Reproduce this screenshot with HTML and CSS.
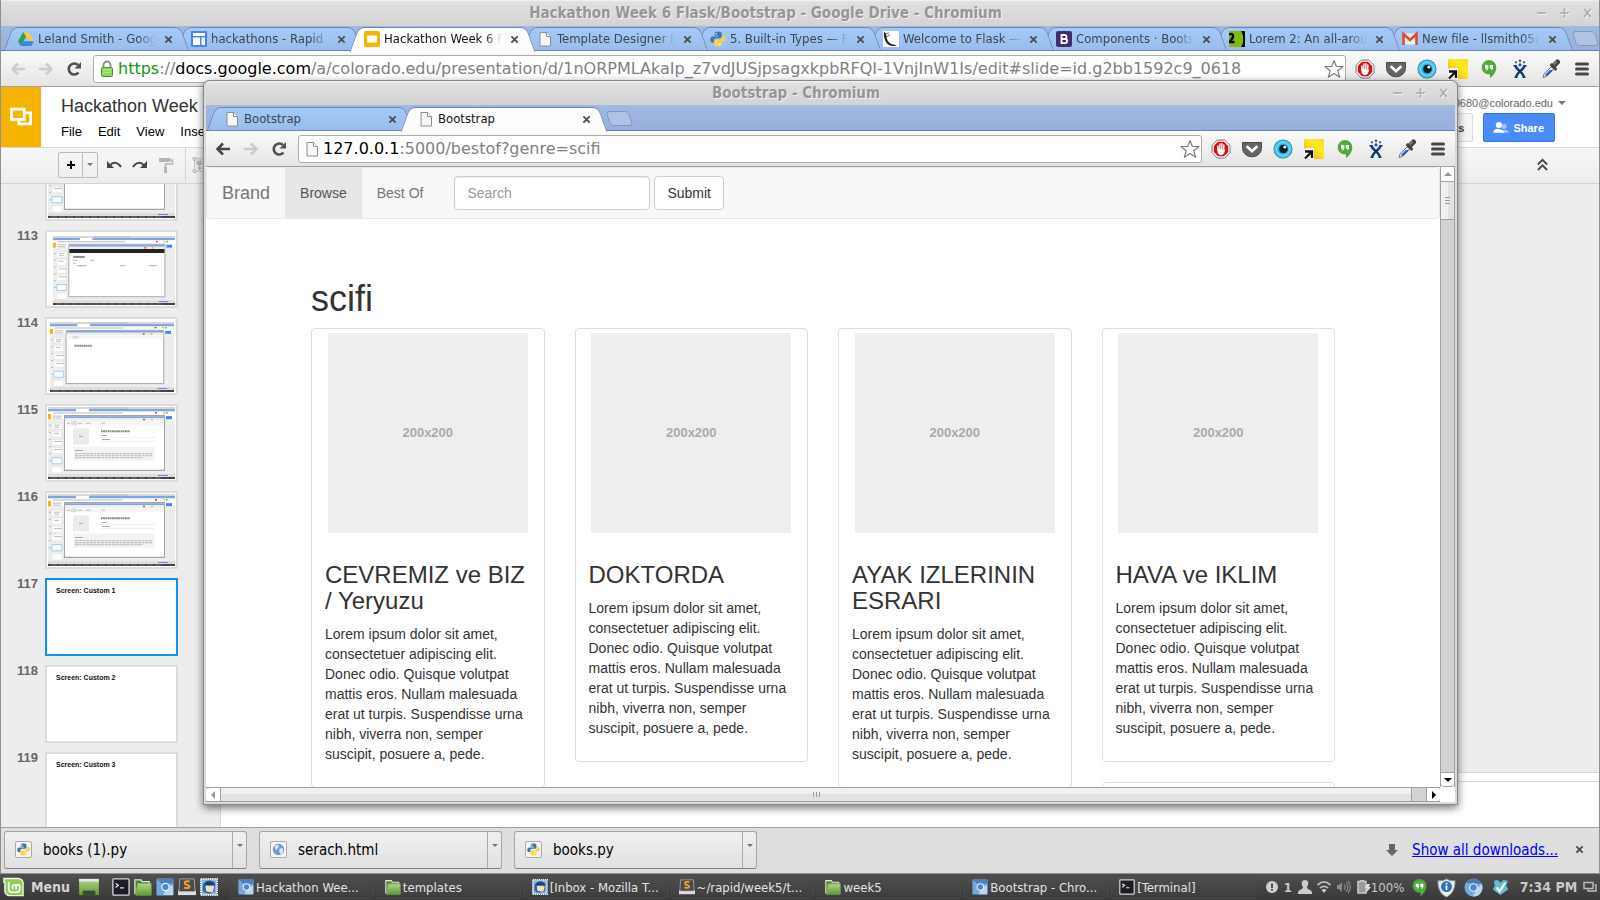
FILE: index.html
```html
<!DOCTYPE html>
<html lang="en">
<head>
<meta charset="utf-8">
<title>Hackathon Week 6 Flask/Bootstrap</title>
<link rel="stylesheet" href="styles.css">
</head>
<body>
<svg class="defs" aria-hidden="true">
  <linearGradient id="gy" x1="0" y1="1" x2="1" y2="0"><stop offset="0" stop-color="#f6941e"/><stop offset=".6" stop-color="#f8ec22"/><stop offset="1" stop-color="#fbe122"/></linearGradient>
  <radialGradient id="gb"><stop offset="0" stop-color="#0d3f5c"/><stop offset=".5" stop-color="#35b3da"/><stop offset=".8" stop-color="#58cdee"/><stop offset="1" stop-color="#1a7fa8"/></radialGradient>
  <linearGradient id="gg" x1="0" y1="0" x2="0" y2="1"><stop offset="0" stop-color="#b3d68a"/><stop offset="1" stop-color="#5f9a35"/></linearGradient>
  <symbol id="i-back" viewBox="0 0 16 16"><path d="M8 2.5 2.500 8 8 13.500M3 8h12" fill="none" stroke="currentColor" stroke-width="2.600"/></symbol>
  <symbol id="i-fwd" viewBox="0 0 16 16"><path d="M8 2.500 13.500 8 8 13.500M1 8h12" fill="none" stroke="currentColor" stroke-width="2.600"/></symbol>
  <symbol id="i-reload" viewBox="0 0 16 16"><path d="M12.500 11.500A5.500 5.500 0 1 1 12 4" fill="none" stroke="#505050" stroke-width="2.600"/><path d="M15 1v6.500H8.500z" fill="#505050"/></symbol>
  <symbol id="i-x" viewBox="0 0 10 10"><path d="m1.500 1.500 7 7m0-7-7 7" fill="none" stroke="currentColor" stroke-width="2"/></symbol>
  <symbol id="i-page" viewBox="0 0 16 16"><path d="M3 1.500h6.500l4 4v9.500H3z" fill="#f7f7f7" stroke="#8e8e8e"/><path d="M9.500 1.500v4h4" fill="#fff" stroke="#8e8e8e"/></symbol>
  <symbol id="i-star" viewBox="0 0 20 20"><path d="m10 1.500 2.300 6H19l-5.200 4.200 1.900 6.500L10 14.400l-5.700 3.800 1.900-6.500L1 7.500h6.700z" fill="#fff" stroke="#7d7d7d" stroke-width="1.200" stroke-linejoin="round"/></symbol>
  <symbol id="i-menu" viewBox="0 0 20 20"><path d="M4.500 5h11M4.500 10h11M4.500 15h11" stroke="#484848" stroke-width="3" stroke-linecap="round"/></symbol>
  <symbol id="i-stop" viewBox="0 0 20 20"><path d="M6.300 1h7.400L19 6.300v7.400L13.700 19H6.300L1 13.700V6.300z" fill="#fff" stroke="#777"/><path d="M7 2.800h6L17.200 7v6L13 17.200H7L2.800 13V7z" fill="#d90d12"/><path d="M6.500 9v3.500c0 2 1.300 3.500 3.500 3.500 2.500 0 3.500-2 4.200-5.500l-1.600.9z" fill="#fff"/><path d="M6.900 11V7M8.900 11V5M10.900 11V4.700M12.800 12V6" stroke="#fff" stroke-width="1.400" stroke-linecap="round"/></symbol>
  <symbol id="i-pocket" viewBox="0 0 20 20"><path d="M.5 3.500h19V9A9.500 8.500 0 0 1 10 17.800 9.500 8.500 0 0 1 .5 9z" fill="#636467" stroke="#4b4b4b"/><path d="m5.500 8 4.500 4.300L14.500 8" fill="none" stroke="#fff" stroke-width="2.600" stroke-linecap="round"/></symbol>
  <symbol id="i-eye" viewBox="0 0 20 20"><circle cx="10" cy="10" r="9.500" fill="url(#gb)"/><circle cx="10" cy="10" r="6.500" fill="none" stroke="#7fdcf3" stroke-width="1"/><circle cx="10.500" cy="10" r="4.300" fill="#081b29"/><circle cx="11.800" cy="8" r="1.600" fill="#e8fbff"/></symbol>
  <symbol id="i-yellow" viewBox="0 0 20 20"><path d="M0 0h20v20H10V9H0z" fill="url(#gy)"/><path d="M0 10h10v10H0z" fill="#fff"/><path d="M1 12.500h7V19M8 12.500 1 19.500" fill="none" stroke="#111" stroke-width="2.300"/></symbol>
  <symbol id="i-hang" viewBox="0 0 20 20"><path d="M10 1a7.300 7.300 0 0 1 7.300 7.500c0 4.500-3.300 8.500-6.300 10.700v-3.700C6.500 15.800 2.700 12.500 2.700 8.500A7.300 7.300 0 0 1 10 1z" fill="#53a93f"/><path d="M6 6h3.300v3.500L7.500 12v-2.600H6zM10.800 6h3.300v3.500L12.300 12v-2.600h-1.500z" fill="#fff"/></symbol>
  <symbol id="i-jira" viewBox="0 0 20 20"><path d="M5.500 6.500c.5 4.500 7.500 6 8.500 12M14.500 6.500c-.5 4.500-7.500 6-8.500 12" fill="none" stroke="#103d70" stroke-width="2.400"/><path d="M3.500 6.800h3M13.500 6.800h3M4.500 18.300h3M12.500 18.300h3" stroke="#103d70" stroke-width="1.500"/><g fill="#2a5d91"><circle cx="6" cy="3.300" r="1.100"/><circle cx="10" cy="1.800" r="1.200"/><circle cx="14" cy="3.300" r="1.100"/><circle cx="10" cy="5.800" r="1.600"/></g></symbol>
  <symbol id="i-drop" viewBox="0 0 20 20"><path d="m2 18.500 1-3.500 8.500-8.500 2.500 2.500L5.500 17.500z" fill="#dce5f8" stroke="#777"/><path d="m4 16 5-5h3.200l-6 6z" fill="#3157c8"/><path d="m9.500 5 6 6" stroke="#444" stroke-width="2.600"/><path d="m12.500 7 4-4" stroke="#444" stroke-width="5" stroke-linecap="round"/><path d="m13 5.500 2.500-3" stroke="#999" stroke-width="1.200"/></symbol>
  <symbol id="i-drive" viewBox="0 0 16 16"><path d="M5.300 1h5.200L16 10.300h-5.300z" fill="#fbc740"/><path d="M5.300 1 8 5.700 2.700 15 0 10.300z" fill="#2ba24c"/><path d="M5.400 10.300H16L13.300 15H2.700z" fill="#3e82f1"/></symbol>
  <symbol id="i-sites" viewBox="0 0 16 16"><rect width="16" height="16" rx="1" fill="#4285f4"/><path d="M2 2h12v3H2zM2 6.500h7V14H2zM10.500 6.500H14V14h-3.500z" fill="#fff"/></symbol>
  <symbol id="i-slides" viewBox="0 0 16 16"><rect width="16" height="16" rx="2" fill="#f4b400"/><rect x="3" y="4.500" width="10" height="7" fill="#fff"/></symbol>
  <symbol id="i-py" viewBox="0 0 16 16"><path d="M8 .5C5.500.500 4.500 1.300 4.500 3v1.700h4v.7H2.800C1 5.400.3 6.800.3 8.400c0 1.700.7 3.100 2.300 3.100H4V9.500c0-1.300 1-2.300 2.300-2.300h3.500c1.200 0 1.900-.8 1.900-1.900V3C11.700 1.200 10.300.5 8 .5z" fill="#3b77a8"/><path d="M8 15.500c2.500 0 3.500-.8 3.500-2.500v-1.700h-4v-.7h5.700c1.800 0 2.500-1.400 2.500-3s-.7-3.100-2.300-3.100H12v2c0 1.300-1 2.300-2.300 2.300H6.200c-1.200 0-1.900.8-1.900 1.900V13c0 1.800 1.400 2.500 3.700 2.500z" fill="#ffd13f"/><circle cx="6.200" cy="2.700" r=".8" fill="#fff"/><circle cx="9.800" cy="13.300" r=".8" fill="#fff"/></symbol>
  <symbol id="i-flask" viewBox="0 0 16 16"><path d="M0 0h16v16H0z" fill="#fff"/><path d="M1 1c3 1 2 4 3 7 1 3.500 4 5.500 10 6.500-5 1.500-9 0-11-3.500S.5 4 1 1z" fill="#222"/><path d="m2 3 4-1M3 6l4-2" stroke="#666"/></symbol>
  <symbol id="i-boot" viewBox="0 0 16 16"><rect width="16" height="16" rx="2" fill="#452b6b"/><path d="M5.500 4h3a2 2 0 0 1 0 4h-3zm0 4h3.500a2.100 2.100 0 0 1 0 4.200H5.500z" fill="none" stroke="#fff" stroke-width="1.800"/></symbol>
  <symbol id="i-lorem" viewBox="0 0 16 16"><path d="M0 0h16v16H0z" fill="#83b80c"/><path d="M0 3.500c3.500-1.500 5 1 3.500 3.500L.5 11h5" fill="none" stroke="#000" stroke-width="2.400"/><path d="M12 0c3 4 3 12 0 16h4V0z" fill="#000"/></symbol>
  <symbol id="i-gmail" viewBox="0 0 16 16"><path d="M1 2.500h14v11H1z" fill="#f3eee2"/><path d="M1.500 14V3L8 9l6.500-6v11" fill="none" stroke="#dd4b3e" stroke-width="2.600"/></symbol>
  <symbol id="i-chromium" viewBox="0 0 20 20"><rect x=".5" y=".5" width="19" height="19" rx="1.500" fill="#76a7dc"/><path d="M1 1h18v5H6z" fill="#4d80bd"/><path d="M8 19h11V8l-6 1z" fill="#b9d5f2"/><circle cx="10.500" cy="10" r="4.700" fill="#e8f2fc"/><circle cx="10.500" cy="10" r="3.400" fill="#4b86cb"/></symbol>
  <symbol id="i-cround" viewBox="0 0 20 20"><circle cx="10" cy="10" r="9.500" fill="#76a7dc"/><path d="M2 5a9.500 9.500 0 0 1 16.500 1H10z" fill="#4979b3"/><path d="M18.500 6A9.500 9.500 0 0 1 9 19.500l5-9z" fill="#bcd6f1"/><circle cx="10" cy="10" r="4.600" fill="#e8f2fc"/><circle cx="10" cy="10" r="3.400" fill="#4b86cb"/></symbol>
  <symbol id="i-folder" viewBox="0 0 20 20"><path d="M1 18V2h7l1 2h8v3" fill="#4f802c" stroke="#dfe8d4" stroke-width="1.400"/><path d="M4 6h15v13H2z" fill="url(#gg)" stroke="#7fae55"/></symbol>
  <symbol id="i-term" viewBox="0 0 20 20"><rect x="1" y="1" width="18" height="18" rx="1" fill="#1d1b26" stroke="#d5d5d5" stroke-width="1.500"/><path d="m4 6 3 2-3 2.500M9 11h4" fill="none" stroke="#eee" stroke-width="1.300"/></symbol>
  <symbol id="i-subl" viewBox="0 0 20 20"><path d="M0 14h20v5H0z" fill="#ddd"/><path d="M2 1h16l1 14H1z" fill="#4a4a4a" stroke="#aaa"/><path d="M13 4C9 3 7 4 7.500 6S13 7.500 12.800 9.500s-3.300 2-6 1" fill="none" stroke="#f49b34" stroke-width="2.300"/></symbol>
  <symbol id="i-mail" viewBox="0 0 20 20"><rect x="1" y="1" width="18" height="18" fill="#8fb4dc" stroke="#f4f4f4" stroke-width="2" stroke-dasharray="1.500 1"/><path d="M3 9c1-7 11-8 14-3l-1 9c-3 3-11 3-13-1z" fill="#2767b0"/><path d="m6 9 5-1.500 5 2-2 6.500-7-1z" fill="#f1dfb6"/><path d="M4 7c3-4 9-4 12 0l-5 1.500z" fill="#183e74"/></symbol>
  <symbol id="shot" viewBox="0 0 127 71" preserveAspectRatio="none">
    <path fill="#ededed" d="M0 0h127v71H0z"/><path fill="#d7d7d7" d="M0 0h127v2H0z"/><path fill="#7fa8dd" d="M0 2h127v2.500H0z"/><path fill="#fff" d="M28 2h13v3H28zM0 4.500h127v7H0z"/><path fill="#bbb" d="M5 5.500h70v1H5zM42 .5h38v1H42z"/>
    <path fill="#f4b400" d="M0 7h3v5H0z"/><path fill="#4285f4" d="M118 9h6v3h-6z"/><path fill="#e33" d="M107 5h2v1.500h-2z"/><path fill="#e8c11c" d="M115 5h2v1.500h-2z"/><path fill="#4a4" d="M118 5h1.500v1.500H118z"/>
    <path fill="#fff" stroke="#ddd" stroke-width=".5" d="M4 16h10v6H4zM4 24h10v6H4zM4 32h10v6H4zM4 40h10v6H4zM4 59h10v6H4z"/><path fill="#fff" stroke="#74bdf1" stroke-width=".7" d="M4 50h10v6H4z"/>
    <path d="M5 9h9M5 11h8M6 18h6M6 20h5M6 26h5M6 34h8M6 42h8M1 18h2M1 25h2M1 32h2M1 39h2M1 46h2M1 53h2" stroke="#aaa" stroke-width=".8"/>
    <path fill="#fff" stroke="#a5a5a5" d="M16.500 8.500h100v54h-100z"/><path fill="#82a5d9" d="M17 9h99v2H17z"/><path fill="#eee" d="M17 11h99v2.500H17z"/><path fill="#d44" d="M95 11.500h2v1.500h-2z"/><path fill="#ecc51d" d="M103 11.500h2v1.500h-2z"/><path fill="#ddd" d="M0 66h127v3H0z"/><path fill="#77f" d="M110 67h10v1h-10z"/><path fill="#444" d="M0 69h127v2H0z"/><path d="M3 70h110" stroke="#999" stroke-width=".6" stroke-dasharray="6 2"/>
  </symbol>
  <symbol id="detail" viewBox="0 0 127 71" preserveAspectRatio="none"><path fill="#f5f5f5" d="M17 14h99v4H17z"/><path fill="#ddd" d="M23 14h6v4h-6z"/><path d="M19 16h3M30 16h4M38 16h4M54 16h3" stroke="#bbb"/><path fill="#ebebeb" d="M25 21h16v16H25z"/><path d="M31 29h4" stroke="#aaa"/><path fill="#f3f3f3" d="M25 39h82v14H25z"/><path d="M53 24h29" stroke="#888" stroke-width="2" stroke-dasharray="1.500 .5 2 .4"/><path d="M54 28h5M54 32h8M27 43h8" stroke="#aaa"/><path d="M53 30h54M53 34h54" stroke="#e5e5e5" stroke-width=".6"/><path d="M27 46h78M27 48h77M27 50h68" stroke="#b5b5b5" stroke-dasharray="3 .7"/></symbol>
</svg>

<main class="browser">
  <header class="titlebar"><h1 class="wintitle">Hackathon Week 6 Flask/Bootstrap - Google Drive - Chromium</h1>
    <div class="winbtns"><button aria-label="Minimise">−</button><button aria-label="Maximise">+</button><button aria-label="Close">×</button></div></header>
  <nav class="tabs">
    <div class="tab z9"><svg class="fav"><use href="#i-drive"/></svg><span class="tabtext">Leland Smith - Google</span><button class="tabx" aria-label="Close tab"><svg><use href="#i-x"/></svg></button></div>
    <div class="tab z8"><svg class="fav"><use href="#i-sites"/></svg><span class="tabtext">hackathons - Rapid</span><button class="tabx" aria-label="Close tab"><svg><use href="#i-x"/></svg></button></div>
    <div class="tab active"><svg class="fav"><use href="#i-slides"/></svg><span class="tabtext">Hackathon Week 6 F</span><button class="tabx" aria-label="Close tab"><svg><use href="#i-x"/></svg></button></div>
    <div class="tab z7"><svg class="fav"><use href="#i-page"/></svg><span class="tabtext">Template Designer D</span><button class="tabx" aria-label="Close tab"><svg><use href="#i-x"/></svg></button></div>
    <div class="tab z6"><svg class="fav"><use href="#i-py"/></svg><span class="tabtext">5. Built-in Types — P</span><button class="tabx" aria-label="Close tab"><svg><use href="#i-x"/></svg></button></div>
    <div class="tab z5"><svg class="fav"><use href="#i-flask"/></svg><span class="tabtext">Welcome to Flask —</span><button class="tabx" aria-label="Close tab"><svg><use href="#i-x"/></svg></button></div>
    <div class="tab z4"><svg class="fav"><use href="#i-boot"/></svg><span class="tabtext">Components · Bootst</span><button class="tabx" aria-label="Close tab"><svg><use href="#i-x"/></svg></button></div>
    <div class="tab z3"><svg class="fav"><use href="#i-lorem"/></svg><span class="tabtext">Lorem 2: An all-aroun</span><button class="tabx" aria-label="Close tab"><svg><use href="#i-x"/></svg></button></div>
    <div class="tab z2"><svg class="fav"><use href="#i-gmail"/></svg><span class="tabtext">New file - llsmith05@</span><button class="tabx" aria-label="Close tab"><svg><use href="#i-x"/></svg></button></div>
    <button class="newtab" aria-label="New tab"></button>
  </nav>
  <div class="toolbar">
    <button class="nav off" aria-label="Back"><svg><use href="#i-back"/></svg></button><button class="nav off" aria-label="Forward"><svg><use href="#i-fwd"/></svg></button><button class="nav" aria-label="Reload"><svg><use href="#i-reload"/></svg></button>
    <div class="omnibox"><svg class="lock" viewBox="0 0 14 18"><path d="M3.500 9V5a3.500 3.500 0 0 1 7 0v4" fill="none" stroke="#888" stroke-width="1.800"/><rect x="1.500" y="7.500" width="11" height="9" rx="1" fill="#8fd45c" stroke="#4d8e2d"/><path d="M3 10h8M3 12.500h8" stroke="#b6e88f"/></svg>
      <span class="url"><span class="secure">https</span>://<b>docs.google.com</b>/a/colorado.edu/presentation/d/1nORPMLAkaIp_z7vdJUSjpsagxkpbRFQI-1VnjInW1Is/edit#slide=id.g2bb1592c9_0618</span><svg class="star"><use href="#i-star"/></svg></div>
    <div class="exts"><button aria-label="AdBlock"><svg><use href="#i-stop"/></svg></button><button aria-label="Pocket"><svg><use href="#i-pocket"/></svg></button><button aria-label="Eye"><svg><use href="#i-eye"/></svg></button><button aria-label="Resizer"><svg><use href="#i-yellow"/></svg></button><button aria-label="Hangouts"><svg><use href="#i-hang"/></svg></button><button aria-label="Tracker"><svg><use href="#i-jira"/></svg></button><button aria-label="Colour picker"><svg><use href="#i-drop"/></svg></button><button aria-label="Menu"><svg><use href="#i-menu"/></svg></button></div>
  </div>

  <section class="docs">
    <header class="dochead">
      <div class="logo"><svg viewBox="0 0 24 24"><path d="M1.500 3.500h14v11h-14z" fill="none" stroke="#fff" stroke-width="3"/><path d="M17 7.500h5.500v12h-13V16" fill="none" stroke="#fff" stroke-width="3"/></svg></div>
      <div class="docname"><h2>Hackathon Week</h2><div class="menus"><button>File</button><button>Edit</button><button>View</button><button>Insert</button></div></div>
      <div class="account"><button class="email">0680@colorado.edu <i class="caret"></i></button><div class="acts"><button class="comments">Comments</button><button class="share"><svg viewBox="0 0 18 16"><circle cx="12.500" cy="6" r="3" fill="#a5c5fa"/><path d="M10 13.500V11c3-2 7-1 8 2.500z" fill="#a5c5fa"/><circle cx="6.500" cy="4.500" r="3.500" fill="#fff"/><path d="M0 13.500C1 9 4 8.500 6.500 9s5.500 1 6 4.500z" fill="#fff"/></svg>Share</button></div></div>
    </header>
    <div class="doctools">
      <div class="addgroup"><button aria-label="New slide"><svg viewBox="0 0 10 10"><path d="M5 1v8M1 5h8" stroke="#000" stroke-width="2"/></svg></button><button aria-label="Layouts"><i class="caret"></i></button></div>
      <button class="tool" aria-label="Undo"><svg viewBox="0 0 16 16"><path d="M1 4v7h7z" fill="#444"/><path d="M4 8.500c3-4 8-3.500 11 1.500" fill="none" stroke="#444" stroke-width="2"/></svg></button>
      <button class="tool" aria-label="Redo"><svg viewBox="0 0 16 16"><path d="M15 4v7H8z" fill="#444"/><path d="M12 8.500C9 4.500 4 5 1 10" fill="none" stroke="#444" stroke-width="2"/></svg></button>
      <button class="tool" aria-label="Paint format"><svg viewBox="0 0 16 16"><path d="M1 1h11v4H1zM6 10h3v6H6z" fill="#b5b5b5"/><path d="M12 3h2.500v4H7.500v3" fill="none" stroke="#b5b5b5" stroke-width="1.500"/></svg></button>
      <span class="sep"></span>
      <button class="tool" aria-label="Fit"><svg viewBox="0 0 16 18"><path d="M3 2h12M3 16h12M3 2v14" stroke="#bbb"/><path d="M5 4h6v5H5zM7.500 9h2v3h2L8.500 15l-3-3h2z" fill="#bbb"/><path d="M1.500.5h3v3h-3zM1.500 14.500h3v3h-3z" fill="#f3f3f3" stroke="#aaa"/></svg></button>
      <button class="collapse" aria-label="Hide menus"><svg viewBox="0 0 12 14"><path d="m1 7 5-5 5 5M1 13l5-5 5 5" fill="none" stroke="#444" stroke-width="2"/></svg></button>
    </div>
    <div class="docbody">
      <ol class="film">
        <li><b></b><div class="thumb"><svg><use href="#shot"/></svg></div></li>
        <li><b>113</b><div class="thumb t113"><svg viewBox="0 0 127 71" preserveAspectRatio="none"><use href="#shot" width="127" height="71"/><path fill="#222" d="M17 13.500h99v4H17z"/><path d="M21 21.500h12" stroke="#888" stroke-width="2"/><path d="M21 25h4M39 25h4M21 28h3M25 30.500h10M70 30.500h5M100 30.500h8" stroke="#aaa"/></svg></div></li>
        <li><b>114</b><div class="thumb t114"><svg viewBox="0 0 127 71" preserveAspectRatio="none"><use href="#shot" width="127" height="71"/><path fill="#f5f5f5" d="M17 14h99v3H17z"/><path fill="#ddd" d="M23 14h6v3h-6z"/><path d="M25 24h18" stroke="#888" stroke-width="2" stroke-dasharray="1.500 .4"/></svg></div></li>
        <li><b>115</b><div class="thumb"><svg viewBox="0 0 127 71" preserveAspectRatio="none"><use href="#shot" width="127" height="71"/><use href="#detail" width="127" height="71"/></svg></div></li>
        <li><b>116</b><div class="thumb"><svg viewBox="0 0 127 71" preserveAspectRatio="none"><use href="#shot" width="127" height="71"/><use href="#detail" width="127" height="71"/></svg></div></li>
        <li><b>117</b><div class="thumb current">Screen: Custom 1</div></li>
        <li><b>118</b><div class="thumb">Screen: Custom 2</div></li>
        <li><b>119</b><div class="thumb">Screen: Custom 3</div></li>
      </ol>
      <div class="stage"><div class="canvas"></div><div class="notes"></div></div>
    </div>
  </section>

  <footer class="shelf">
    <div class="dl"><button class="dlfile"><span class="dlicon"><svg><use href="#i-py"/></svg></span>books (1).py</button><button class="dlmore" aria-label="Options"><i class="caret"></i></button></div>
    <div class="dl"><button class="dlfile"><span class="dlicon"><svg viewBox="0 0 16 16"><circle cx="8" cy="8" r="7" fill="#6f9ccb"/><path d="M3 4l4-2 2 2-2 2-1 3-2-2zM9 7l4-1 1 4-3 4-2-3z" fill="#dce8f4"/></svg></span>serach.html</button><button class="dlmore" aria-label="Options"><i class="caret"></i></button></div>
    <div class="dl"><button class="dlfile"><span class="dlicon"><svg><use href="#i-py"/></svg></span>books.py</button><button class="dlmore" aria-label="Options"><i class="caret"></i></button></div>
    <div class="showall"><svg viewBox="0 0 12 14"><path d="M3 1h6v6h3l-6 6-6-6h3z" fill="#666"/></svg><a href="#downloads">Show all downloads...</a><button class="tabx" aria-label="Close shelf"><svg><use href="#i-x"/></svg></button></div>
  </footer>
</main>

<section class="popup">
  <header class="titlebar"><h1 class="wintitle">Bootstrap - Chromium</h1>
    <div class="winbtns"><button aria-label="Minimise">−</button><button aria-label="Maximise">+</button><button aria-label="Close">×</button></div></header>
  <nav class="tabs">
    <div class="tab z9"><svg class="fav"><use href="#i-page"/></svg><span class="tabtext">Bootstrap</span><button class="tabx" aria-label="Close tab"><svg><use href="#i-x"/></svg></button></div>
    <div class="tab active"><svg class="fav"><use href="#i-page"/></svg><span class="tabtext">Bootstrap</span><button class="tabx" aria-label="Close tab"><svg><use href="#i-x"/></svg></button></div>
    <button class="newtab" aria-label="New tab"></button>
  </nav>
  <div class="toolbar">
    <button class="nav" aria-label="Back"><svg><use href="#i-back"/></svg></button><button class="nav off" aria-label="Forward"><svg><use href="#i-fwd"/></svg></button><button class="nav" aria-label="Reload"><svg><use href="#i-reload"/></svg></button>
    <div class="omnibox"><svg class="lock"><use href="#i-page"/></svg><span class="url"><b>127.0.0.1</b>:5000/bestof?genre=scifi</span><svg class="star"><use href="#i-star"/></svg></div>
    <div class="exts"><button aria-label="AdBlock"><svg><use href="#i-stop"/></svg></button><button aria-label="Pocket"><svg><use href="#i-pocket"/></svg></button><button aria-label="Eye"><svg><use href="#i-eye"/></svg></button><button aria-label="Resizer"><svg><use href="#i-yellow"/></svg></button><button aria-label="Hangouts"><svg><use href="#i-hang"/></svg></button><button aria-label="Tracker"><svg><use href="#i-jira"/></svg></button><button aria-label="Colour picker"><svg><use href="#i-drop"/></svg></button><button aria-label="Menu"><svg><use href="#i-menu"/></svg></button></div>
  </div>
  <div class="viewport">
    <div class="page">
      <nav class="navbar"><a class="brand" href="#home">Brand</a><a class="on" href="#browse">Browse</a><a href="#bestof">Best Of</a>
        <form><input type="text" placeholder="Search" aria-label="Search"><button type="button">Submit</button></form></nav>
      <div class="container">
        <h2>scifi</h2>
        <div class="cols">
          <div class="col"><article class="card"><div class="ph">200x200</div><div class="caption"><h3>CEVREMIZ ve BIZ / Yeryuzu</h3><p>Lorem ipsum dolor sit amet, consectetuer adipiscing elit. Donec odio. Quisque volutpat mattis eros. Nullam malesuada erat ut turpis. Suspendisse urna nibh, viverra non, semper suscipit, posuere a, pede.</p></div></article></div>
          <div class="col"><article class="card"><div class="ph">200x200</div><div class="caption"><h3>DOKTORDA</h3><p>Lorem ipsum dolor sit amet, consectetuer adipiscing elit. Donec odio. Quisque volutpat mattis eros. Nullam malesuada erat ut turpis. Suspendisse urna nibh, viverra non, semper suscipit, posuere a, pede.</p></div></article></div>
          <div class="col"><article class="card"><div class="ph">200x200</div><div class="caption"><h3>AYAK IZLERININ ESRARI</h3><p>Lorem ipsum dolor sit amet, consectetuer adipiscing elit. Donec odio. Quisque volutpat mattis eros. Nullam malesuada erat ut turpis. Suspendisse urna nibh, viverra non, semper suscipit, posuere a, pede.</p></div></article></div>
          <div class="col"><article class="card"><div class="ph">200x200</div><div class="caption"><h3>HAVA ve IKLIM</h3><p>Lorem ipsum dolor sit amet, consectetuer adipiscing elit. Donec odio. Quisque volutpat mattis eros. Nullam malesuada erat ut turpis. Suspendisse urna nibh, viverra non, semper suscipit, posuere a, pede.</p></div></article><article class="card"><div class="ph"></div></article></div>
        </div>
      </div>
    </div>
    <div class="vscroll"><span class="sbtn"><i class="arr up"></i></span><span class="vthumb"><i></i><i></i><i></i></span><span class="track"></span><span class="sbtn end"><i class="arr down"></i></span></div>
  </div>
  <div class="hscroll"><span class="sbtn"><i class="arr left"></i></span><span class="hthumb"><i></i><i></i><i></i></span><span class="track"></span><span class="sbtn end"><i class="arr right"></i></span></div>
</section>

<footer class="taskbar">
  <button class="mint"><svg viewBox="0 0 22 20"><path d="M1 1h15a5 5 0 0 1 5 5v13H7a5 5 0 0 1-5-5V5H1z" fill="#8fce52" stroke="#eef7e4" stroke-width="1.500"/><path d="M6 4.500v8a3 3 0 0 0 3 3h5.500a3 3 0 0 0 3-3V9a2 2 0 0 0-3.800 0v3.500V9A2 2 0 0 0 10 9v3.500" fill="none" stroke="#fff" stroke-width="1.800"/></svg>Menu</button>
  <div class="launch"><button class="desk" aria-label="Show desktop"><svg viewBox="0 0 22 20"><path d="M0 1h22v18H0z" fill="url(#gg)"/><path d="M0 1h22v3H0z" fill="#e7e7e7"/><path d="M4 14h14v5H4z" fill="#3c4a33"/></svg></button><button aria-label="Terminal"><svg><use href="#i-term"/></svg></button><button aria-label="Files"><svg><use href="#i-folder"/></svg></button><button aria-label="Chromium"><svg><use href="#i-chromium"/></svg></button><button aria-label="Sublime"><svg><use href="#i-subl"/></svg></button><button aria-label="Thunderbird"><svg><use href="#i-mail"/></svg></button></div>
  <div class="tasks"><button><svg><use href="#i-chromium"/></svg>Hackathon Wee...</button><button><svg><use href="#i-folder"/></svg>templates</button><button><svg><use href="#i-mail"/></svg>[Inbox - Mozilla T...</button><button><svg><use href="#i-subl"/></svg>~/rapid/week5/t...</button><button><svg><use href="#i-folder"/></svg>week5</button><button><svg><use href="#i-chromium"/></svg>Bootstrap - Chro...</button><button><svg><use href="#i-term"/></svg>[Terminal]</button></div>
  <div class="tray">
    <svg class="s12" viewBox="0 0 12 12"><circle cx="6" cy="6" r="6" fill="#d0d0d0"/><path d="M6 2.500v4.500M6 8v1.800" stroke="#444" stroke-width="1.800"/></svg><b>1</b>
    <svg class="s14" viewBox="0 0 14 14"><path d="M7 0c4 0 4 4 2 7 0 3 5 2 5 6v1H0v-1c0-4 5-3 5-6C3 4 3 0 7 0z" fill="#ccc"/></svg>
    <svg class="s14" viewBox="0 0 14 14"><path d="M.5 5c4-4 9-4 13 0M3 8c3-2.500 5-2.500 8 0" fill="none" stroke="#bbb" stroke-width="1.800"/><path d="m4.500 10 2.500 3 2.500-3c-2-1.200-3-1.200-5 0z" fill="#ccc"/></svg>
    <svg class="s14" viewBox="0 0 14 14"><path d="M0 5h2l3-3v10L2 9H0z" fill="#888"/><path d="M7 4.500c1.500 1.500 1.500 3.500 0 5M9 2.500c2.500 2.500 2.500 6.500 0 9M11 1c3 3 3 9 0 12" fill="none" stroke="#888" stroke-width="1.200"/></svg>
    <span class="batt"><svg class="s14" viewBox="0 0 14 14"><path d="M3.500 1.500V0h3v1.500H9V13H1V1.500z" fill="#999" stroke="#ccc" stroke-width="1.500"/><path d="M10 4l-2 4h2l-1 5 5-6h-2l1-3z" fill="#ddd"/></svg>100%</span>
    <div class="apps">
    <svg><use href="#i-hang"/></svg>
    <svg viewBox="0 0 20 20"><path d="M10 1c3 2 6 2 9 2 0 9-3 14-9 17C4 17 1 12 1 3c3 0 6 0 9-2z" fill="#e7edf2" stroke="#999"/><circle cx="10" cy="9" r="5.800" fill="#3670b5"/><path d="M10 8v4.500M10 5v1.800" stroke="#fff" stroke-width="1.800"/></svg>
    <svg><use href="#i-cround"/></svg>
    <svg viewBox="0 0 20 20"><path d="m3 3 4-1 3 3 3-3 5 1-2 5 2 4-8 6-8-6 2-4z" fill="#65bcd1"/><path d="m6 10 3 4 6-9" fill="none" stroke="#fff" stroke-width="2.300"/></svg>
    </div>
    <b class="clock">7:34 PM</b>
    <svg class="s14" viewBox="0 0 14 14"><path d="M1 2.500h9v6H1zM11.500 5H13v6H5V9.500" fill="none" stroke="#bbb" stroke-width="1.500"/></svg>
  </div>
</footer>
</body>
</html>
```
FILE: styles.css
```css
* { box-sizing: border-box; }
body { margin: 0; height: 100vh; display: flex; flex-direction: column; position: relative; overflow: hidden; font-family: "DejaVu Sans Condensed", "DejaVu Sans", sans-serif; font-size: 13px; color: #000; background: #444; }
button { font: inherit; color: inherit; margin: 0; padding: 0; border: 0; background: none; display: inline-flex; align-items: center; justify-content: center; flex: none; white-space: nowrap; }
h1, h2, h3, p, ol { margin: 0; padding: 0; }
svg { flex: none; display: block; }
.defs { position: absolute; width: 0; height: 0; }

.browser { flex: 1; min-height: 0; display: flex; flex-direction: column; border: solid #909090; border-width: 0 1px 1px; background: #ddd; }
.titlebar { flex: none; height: 26px; display: flex; align-items: center; background: linear-gradient(#f4f4f4, #e0e0e0 2px, #d3d3d3); }
.wintitle { flex: 1; text-align: center; font-size: 15px; line-height: 20px; font-weight: bold; color: #969696; text-shadow: 1px 1px #f4f4f4; }
.winbtns { display: flex; }
.winbtns button { width: 23px; height: 20px; font-size: 15px; font-weight: bold; line-height: 20px; color: #b0b0b0; text-shadow: 1px 1px #f4f4f4; }

.tabs { flex: none; height: 25px; display: flex; padding: 1px 2px 0; background: linear-gradient(#a1bae1, #97afdb); border-bottom: 1px solid #657fae; }
.tab { position: relative; z-index: 1; flex: 1; min-width: 0; height: 24px; margin-right: -14px; padding: 0 14px 0 15px; display: flex; align-items: center; gap: 4px; color: #3c4654; --fill: linear-gradient(#a6caf7, #98bdec); --line: #6b87b3; }
.tab::before, .tab::after { content: ""; position: absolute; z-index: -1; top: 0; bottom: 0; background: var(--fill); border-top: 1px solid var(--line); border-bottom: 1px solid var(--line); }
.tab::before { left: 5px; right: 40%; transform: skewX(-20deg); border-left: 1px solid var(--line); border-top-left-radius: 6px; }
.tab::after { right: 5px; left: 40%; transform: skewX(20deg); border-right: 1px solid var(--line); border-top-right-radius: 6px; }
.z9 { z-index: 9; } .z8 { z-index: 8; } .z7 { z-index: 7; } .z6 { z-index: 6; } .z5 { z-index: 5; } .z4 { z-index: 4; } .z3 { z-index: 3; } .z2 { z-index: 2; }
.tab.active { z-index: 10; color: #111; --fill: #fdfdfd; }
.tab.active::before, .tab.active::after { border-bottom: 0; bottom: -1px; }
.fav { width: 16px; height: 16px; }
.tabtext { flex: 1; min-width: 0; overflow: hidden; white-space: nowrap; line-height: 20px; -webkit-mask-image: linear-gradient(90deg, #000 calc(100% - 18px), transparent); mask-image: linear-gradient(90deg, #000 calc(100% - 18px), transparent); }
.tabx { width: 18px; height: 18px; color: #4d4d4d; }
.tab .tabx { width: 16px; }
.tabx svg { width: 9px; height: 9px; }
.newtab { width: 23px; height: 15px; margin: 4px 0 0 14px; border: 1px solid #7f98c6; border-radius: 4px; background: #b1c3e4; transform: skewX(18deg); }

.toolbar { flex: none; height: 36px; display: flex; align-items: center; padding: 0 2px 0 3px; background: linear-gradient(#fbfbfb, #e4e4e4); border-bottom: 1px solid #a0a0a0; }
.nav { width: 28px; height: 28px; color: #484848; }
.nav svg { width: 16px; height: 16px; }
.nav.off { color: #cbcbcb; }
.omnibox { flex: 1; min-width: 0; height: 28px; margin: 0 3px 0 5px; padding: 0 1px 0 5px; display: flex; align-items: center; gap: 3px; background: #fff; border: 1px solid #adadad; border-radius: 3px; }
.lock { width: 16px; height: 18px; }
.url { flex: 1; min-width: 0; overflow: hidden; white-space: nowrap; font-family: "DejaVu Sans", sans-serif; font-size: 16px; line-height: 24px; color: #808080; }
.url b { font-weight: normal; color: #000; }
.url .secure { color: #0a9a12; }
.star { width: 20px; height: 20px; }
.exts { display: flex; }
.exts button { width: 31px; height: 28px; }
.exts svg { width: 20px; height: 20px; }

.docs { flex: 1; min-height: 0; display: flex; flex-direction: column; background: #fff; font-family: "Liberation Sans", Arial, sans-serif; }
.dochead { flex: none; height: 61px; display: flex; border-bottom: 1px solid #d8d8d8; }
.logo { width: 40px; display: flex; align-items: center; justify-content: center; background: #f4b400; }
.logo svg { width: 22px; height: 22px; }
.docname { flex: 1; padding: 8px 0 0 20px; }
.docname h2 { font-size: 18px; font-weight: normal; line-height: 22px; color: #333; }
.menus { display: flex; gap: 16px; padding-top: 5px; }
.menus button { font-size: 13px; line-height: 20px; }
.account { display: flex; flex-direction: column; align-items: flex-end; padding: 8px 33px 0 0; }
.email { gap: 5px; font-size: 11px; line-height: 16px; color: #666; margin-bottom: 2px; }
.caret { width: 0; height: 0; border: solid transparent; border-width: 4px 4px 0; border-top-color: #777; }
.acts { display: flex; gap: 10px; padding-right: 11px; }
.acts button { height: 29px; border-radius: 2px; font-size: 11px; font-weight: bold; }
.comments { padding: 0 8px; border: 1px solid #dcdcdc; background: #f6f6f6; color: #444; }
.share { gap: 4px; padding: 0 10px 0 9px; border: 1px solid #3079ed; background: #4b8cf8; color: #fff; }
.share svg { width: 16px; height: 14px; }
.doctools { flex: none; height: 36px; display: flex; align-items: center; padding: 0 50px 2px 57px; background: linear-gradient(#f7f7f7, #ededed); border-bottom: 1px solid #d5d5d5; }
.addgroup { display: flex; height: 26px; margin-right: 3px; border: 1px solid #bbb; border-radius: 2px; }
.addgroup button { width: 23px; }
.addgroup button + button { width: 15px; border-left: 1px solid #bbb; }
.addgroup svg { width: 10px; height: 10px; }
.addgroup .caret { border-width: 3px 3px 0; }
.tool { width: 26px; height: 26px; }
.tool svg { width: 16px; height: 16px; }
.sep { width: 1px; height: 34px; margin: 0 0 0 6px; background: #d5d5d5; }
.collapse { margin-left: auto; width: 14px; }
.collapse svg { width: 11px; height: 13px; }
.docbody { flex: 1; min-height: 0; display: flex; background: #ededed; }
.film { width: 220px; overflow: hidden; display: flex; flex-direction: column; justify-content: flex-start; gap: 9px; border-right: 1px solid #d9d9d9; list-style: none; }
.film li { flex: none; display: flex; gap: 7px; }
.film li:first-child { margin-top: -41px; }
.film b { width: 37px; text-align: right; font-size: 13px; line-height: 12px; color: #666; }
.thumb { width: 133px; height: 78px; border: 2px solid #dcdcdc; background: #fff; padding: 1px; font-size: 7px; font-weight: bold; line-height: 8px; color: #111; }
.thumb svg { width: 100%; height: 100%; }
.thumb:not(:has(svg)) { padding: 7px 9px; }
.t113 { padding: 4px 1px 1px 6px; } .t114 { padding: 3px 2px 1px 3px; }
.thumb.current { border-color: #0a94fb; }
.stage { flex: 1; display: flex; flex-direction: column; }
.canvas { flex: 1; border-bottom: 1px solid #d5d5d5; }
.notes { height: 54px; border-top: 8px solid #fff; background: linear-gradient(#d9d9d9 1px, #fff 1px); }

.shelf { flex: none; height: 46px; display: flex; align-items: center; gap: 12px; padding: 0 11px 2px 3px; background: #dedede; border-top: 1px solid #a0a0a0; font-size: 15px; }
.dl { width: 243px; height: 38px; display: flex; border: 1px solid #a6a6a6; border-bottom-color: #808080; border-radius: 3px; background: linear-gradient(#f0f0f0, #e1e1e1); }
.dlfile { flex: 1; justify-content: flex-start; gap: 11px; padding-left: 10px; }
.dlicon { width: 17px; height: 17px; display: flex; align-items: center; justify-content: center; border: 1px solid #aaa; border-radius: 2px; background: #f5f5f5; }
.dlicon svg { width: 13px; height: 13px; }
.dlmore { width: 14px; border-left: 1px solid #aaa; padding-bottom: 8px; }
.dlmore .caret { border-width: 3px 3px 0; }
.showall { margin-left: auto; display: flex; align-items: center; gap: 14px; }
.showall > svg { width: 12px; height: 14px; }
.showall a { color: #00e; }
.showall .tabx { margin-left: -2px; }

.popup { position: absolute; z-index: 20; top: 80px; right: 142px; bottom: 95px; left: 203px; display: flex; flex-direction: column; padding: 0 2px 2px; background: #dadada; border: 1px solid #888; border-radius: 6px 6px 0 0; box-shadow: 0 3px 8px rgba(0,0,0,.55); }
.popup .titlebar { height: 24px; border-radius: 5px 5px 0 0; }
.popup .tabs { height: 26px; padding-top: 2px; padding-left: 0; }
.popup .tab { max-width: 208px; padding-left: 18px; }
.popup .tabtext { -webkit-mask-image: none; mask-image: none; }
.popup .toolbar { padding-right: 2px; }
.popup .lock { height: 16px; }

.viewport { flex: 1; min-height: 0; display: flex; background: #fff; }
.page { flex: 1; min-width: 0; overflow: hidden; font-family: "Liberation Sans", Arial, sans-serif; font-size: 14px; line-height: 20px; color: #333; }
.navbar { height: 52px; display: flex; align-items: stretch; background: #f8f8f8; border: 1px solid #e7e7e7; border-radius: 4px; }
.navbar a { padding: 15px; color: #777; text-decoration: none; }
.navbar .brand { font-size: 18px; }
.navbar .on { background: #e7e7e7; color: #555; }
.navbar form { display: flex; align-items: center; gap: 4px; padding-left: 16px; }
.navbar input { width: 196px; height: 34px; padding: 6px 12px; border: 1px solid #ccc; border-radius: 4px; background: #fff; font: inherit; box-shadow: inset 0 1px 1px rgba(0,0,0,.075); }
.navbar input::placeholder { color: #999; opacity: 1; }
.navbar form button { height: 34px; padding: 0 12px; border: 1px solid #ccc; border-radius: 4px; background: #fff; color: #333; }
.container { padding: 60px 105px 0; }
.container h2 { font-size: 36px; font-weight: normal; line-height: 40px; margin-bottom: 9px; }
.cols { display: grid; grid-template-columns: repeat(4, minmax(0, 1fr)); gap: 30px; align-items: start; }
.card { padding: 4px; margin-bottom: 20px; border: 1px solid #ddd; border-radius: 4px; background: #fff; }
.ph { width: 200px; height: 200px; margin: 0 auto; display: flex; align-items: center; justify-content: center; background: #eee; color: #aaa; font-size: 13px; font-weight: bold; }
.caption { padding: 9px; }
.caption h3 { margin: 20px 0 10px; font-size: 24px; font-weight: normal; line-height: 26px; }
.caption p { margin-bottom: 10px; }

.vscroll, .hscroll { flex: none; display: flex; }
.vscroll { width: 15px; flex-direction: column; border: solid #a0a0a0; border-width: 0 1px; }
.hscroll { height: 15px; margin-right: 15px; border: solid #a0a0a0; border-width: 1px 0; box-shadow: 15px 0 #fff; }
.sbtn { flex: none; width: 14px; height: 13px; display: flex; align-items: center; justify-content: center; background: #fff; border-radius: 4px 0 0 4px; }
.sbtn.end { border-radius: 0 4px 4px 0; }
.hscroll .end { border-left: 1px solid #a0a0a0; }
.vscroll .sbtn { width: 13px; border-radius: 4px 4px 0 0; border-bottom: 1px solid #a0a0a0; height: 15px; }
.vscroll .end { border-top: 1px solid #a0a0a0; border-radius: 0 0 4px 4px; }
.track { background: #d2d2d2; }
.vscroll .track { flex: 1; }
.hscroll .track { width: 14px; }
.vthumb { height: 38px; display: flex; flex-direction: column; gap: 2px; align-items: center; justify-content: center; background: linear-gradient(90deg, #f0f0f0 50%, #e2e2e2 50%); border-bottom: 1px solid #a0a0a0; }
.vthumb i { width: 5px; height: 1px; background: #999; }
.hthumb { flex: 1; display: flex; gap: 2px; align-items: center; justify-content: center; background: linear-gradient(#f0f0f0 50%, #e2e2e2 50%); border: solid #a0a0a0; border-width: 0 1px; }
.hthumb i { width: 1px; height: 5px; background: #999; }
.arr { width: 0; height: 0; border: 4px solid transparent; }
.up { border-top: 0; border-bottom-color: #999; }
.down { border-bottom: 0; border-top-color: #000; }
.left { border-left: 0; border-right-color: #999; }
.right { border-right: 0; border-left-color: #000; }

.taskbar { flex: none; height: 26px; display: flex; align-items: center; padding: 0 3px; background: linear-gradient(#505050, #383838); color: #e3e3e3; font-size: 13px; }
.taskbar svg { width: 18px; height: 18px; }
.taskbar .mint { width: 75px; justify-content: flex-start; gap: 7px; font-size: 14px; font-weight: bold; color: #d5d5d5; }
.taskbar .mint svg { width: 21px; height: 20px; }
.launch { display: flex; gap: 4px; width: 152px; }
.launch .desk { margin-right: 8px; }
.launch .desk svg { width: 22px; }
.tasks { flex: 1; min-width: 0; display: flex; gap: 3px; }
.tasks button { flex: 1; min-width: 0; height: 24px; padding-left: 7px; justify-content: flex-start; gap: 2px; border: 1px solid #484848; border-radius: 3px; background: linear-gradient(#4e4e4e, #3d3d3d); }
.tasks svg { width: 16px; height: 16px; }
.tray { flex: none; width: 342px; display: flex; align-items: center; justify-content: space-between; padding-left: 11px; color: #c8c8c8; }
.tray .s12 { width: 12px; height: 12px; }
.tray .s14 { width: 14px; height: 14px; }
.batt { display: flex; align-items: center; }
.apps { display: flex; gap: 8px; }
.taskbar .apps svg { width: 19px; height: 19px; }
.clock { margin-left: 4px; font-size: 14px; }
```
